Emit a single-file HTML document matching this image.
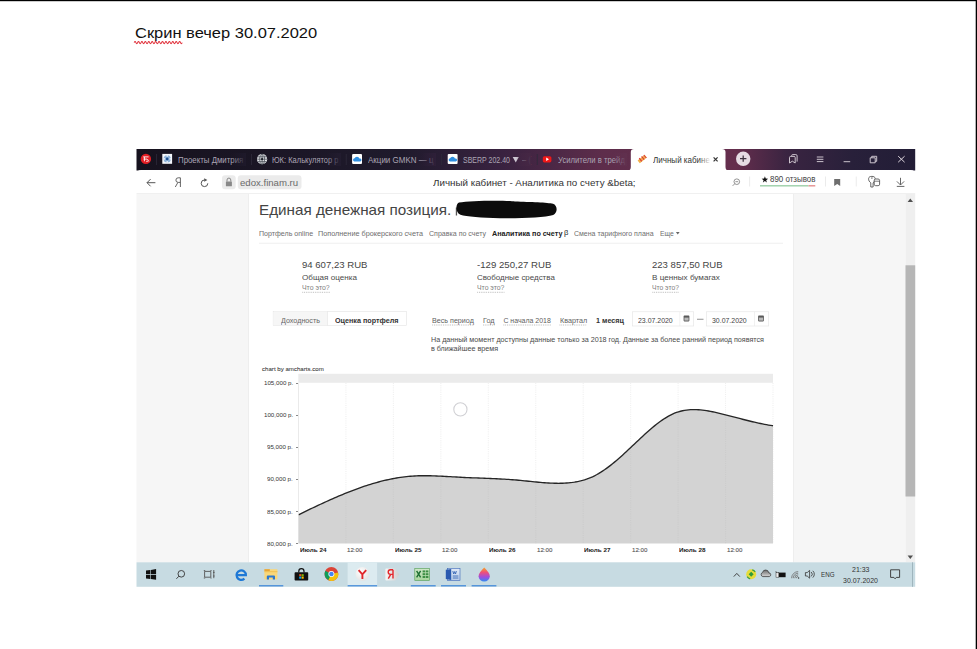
<!DOCTYPE html>
<html><head><meta charset="utf-8">
<style>
html,body{margin:0;padding:0;width:977px;height:649px;overflow:hidden;background:#fff;}
body{position:relative;font-family:"Liberation Sans",sans-serif;}
.t{position:absolute;white-space:pre;line-height:1;transform-origin:0 0;}
svg{position:absolute;left:0;top:0;}
</style></head><body>
<svg width="977" height="649" viewBox="0 0 977 649">
<defs>
<linearGradient id="tabg" x1="136" y1="0" x2="915" y2="0" gradientUnits="userSpaceOnUse">
<stop offset="0" stop-color="#16121e"/>
<stop offset="0.34" stop-color="#1f1a2c"/>
<stop offset="0.47" stop-color="#392240"/>
<stop offset="0.6" stop-color="#5e2d4b"/>
<stop offset="0.77" stop-color="#652e4d"/>
<stop offset="0.835" stop-color="#3a2441"/>
<stop offset="0.92" stop-color="#28203a"/>
<stop offset="1" stop-color="#221d36"/>
</linearGradient>
</defs>
<!-- page borders -->
<rect x="0" y="0" width="977" height="1" fill="#000"/>
<rect x="0" y="1" width="977" height="1" fill="#000" opacity="0.2"/>
<rect x="976" y="0" width="1" height="649" fill="#000"/>
<rect x="975" y="0" width="1" height="649" fill="#000" opacity="0.3"/>
<!-- red squiggle -->
<path d="M134.2,42.6 q0.86,-2.2 1.715,0 q0.86,2.2 1.715,0 q0.86,-2.2 1.715,0 q0.86,2.2 1.715,0 q0.86,-2.2 1.715,0 q0.86,2.2 1.715,0 q0.86,-2.2 1.715,0 q0.86,2.2 1.715,0 q0.86,-2.2 1.715,0 q0.86,2.2 1.715,0 q0.86,-2.2 1.715,0 q0.86,2.2 1.715,0 q0.86,-2.2 1.715,0 q0.86,2.2 1.715,0 q0.86,-2.2 1.715,0 q0.86,2.2 1.715,0 q0.86,-2.2 1.715,0 q0.86,2.2 1.715,0 q0.86,-2.2 1.715,0 q0.86,2.2 1.715,0 q0.86,-2.2 1.715,0 q0.86,2.2 1.715,0 q0.86,-2.2 1.715,0 q0.86,2.2 1.715,0 q0.86,-2.2 1.715,0 q0.86,2.2 1.715,0 q0.86,-2.2 1.715,0 q0.86,2.2 1.715,0" fill="none" stroke="#e0303a" stroke-width="1.05"/>

<!-- screenshot frame -->
<g>
<!-- tab bar -->
<rect x="136.5" y="149" width="778.7" height="21.5" fill="url(#tabg)"/>
<!-- address bar -->
<path d="M136.5,174.8 Q136.5,170.1 141,170.1 L910.7,170.1 Q915.2,170.1 915.2,174.8 L915.2,194 L136.5,194 Z" fill="#fff"/>
<rect x="136.5" y="193.4" width="778.7" height="0.7" fill="#e6e6e6"/>
<!-- active tab -->
<path d="M627.5,170.5 Q630.8,170.5 630.8,167 L630.8,152 Q630.8,149 634,149 L722,149 Q725.5,149 725.5,152 L725.5,167 Q725.5,170.5 729,170.5 Z" fill="#fff"/>
<!-- content panels -->
<rect x="136.5" y="194" width="112.5" height="368.3" fill="#f6f6f6"/>
<rect x="248" y="194" width="1" height="368.3" fill="#eeeeee"/>
<rect x="249" y="194" width="544" height="368.3" fill="#fff"/>
<rect x="793" y="194" width="112.5" height="368.3" fill="#f6f6f6"/>
<rect x="793" y="194" width="1" height="368.3" fill="#eeeeee"/>
<rect x="905.5" y="194" width="9.7" height="368.3" fill="#efefef"/>
<rect x="905.5" y="265.3" width="9.7" height="231.2" fill="#b6b6b6"/>
<path d="M907.6,202 L910.3,198.6 L913,202 Z" fill="#505050"/>
<path d="M907.6,555.6 L910.3,559 L913,555.6 Z" fill="#505050"/>
<!-- taskbar -->
<rect x="136.5" y="562.3" width="778.7" height="24.5" fill="#c7dbe2"/>
<rect x="912" y="562.3" width="1" height="24.5" fill="#9fb5bd"/>
</g>

<!-- TAB ICONS -->
<circle cx="145.9" cy="158.9" r="5.2" fill="#e31e24"/>
<path d="M143.2,156.9 h5.4 M144.4,156.9 v4.4 M143.6,159.1 h3.4 M147.4,159.1 l1.3,2.3 M146.2,161.3 h1.6" stroke="#fff" stroke-width="0.9" fill="none"/>
<g fill="#2e2a3a">
<rect x="156.2" y="154" width="0.8" height="11"/>
<rect x="251.2" y="154" width="0.8" height="11"/>
<rect x="345.8" y="154" width="0.8" height="11"/>
<rect x="441.3" y="154" width="0.8" height="11"/>
<rect x="536.8" y="154" width="0.8" height="11"/>
</g>
<!-- tab1 icon -->
<rect x="162.3" y="153.9" width="9.8" height="9.9" fill="#f4f6fa"/>
<circle cx="167.2" cy="158.9" r="3.6" fill="#8fb4dc"/>
<circle cx="167.2" cy="158.9" r="1.3" fill="#1f4f8f"/>
<g fill="#f4f6fa"><circle cx="167.2" cy="155.9" r="0.8"/><circle cx="167.2" cy="161.9" r="0.8"/><circle cx="164.2" cy="158.9" r="0.8"/><circle cx="170.2" cy="158.9" r="0.8"/></g>
<!-- tab2 icon globe -->
<circle cx="262.1" cy="159.2" r="5.1" fill="#e2e4e8"/>
<g stroke="#4a4f58" stroke-width="0.8" fill="none">
<path d="M257.2,159.2 h9.8 M262.1,154.2 v10"/>
<ellipse cx="262.1" cy="159.2" rx="2.4" ry="5"/>
<path d="M257.9,156.8 h8.4 M257.9,161.6 h8.4"/>
</g>
<circle cx="262.1" cy="159.2" r="1.1" fill="#1b2028"/>
<!-- tab3/4 icons -->
<rect x="352.1" y="154" width="9.9" height="10" fill="#fff" rx="1"/>
<path d="M354.2,161.6 a1.7,1.7 0 0 1 0.3,-3.3 a2.6,2.6 0 0 1 4.9,0.2 a1.6,1.6 0 0 1 0.9,3.1 Z" fill="#2f8ee0"/>
<rect x="447.7" y="154" width="9.9" height="10" fill="#fff" rx="1"/>
<path d="M449.8,161.6 a1.7,1.7 0 0 1 0.3,-3.3 a2.6,2.6 0 0 1 4.9,0.2 a1.6,1.6 0 0 1 0.9,3.1 Z" fill="#2f8ee0"/>
<path d="M512.7,156.9 h6.1 l-3.05,5.6 Z" fill="#cfc8d4"/>
<!-- youtube -->
<rect x="542.8" y="156.2" width="8.6" height="6.2" rx="1.6" fill="#f01818"/>
<path d="M546.2,157.6 L549,159.3 L546.2,161 Z" fill="#fff"/>
<!-- active tab icon -->
<path d="M637.6,160.6 L644.6,154.8 L646.8,157.4 L639.8,163.2 Z" fill="#f2b04a"/>
<path d="M639.2,158.2 L641.8,161.4 M641.6,156.4 L644.2,159.6 M643.8,155 L646.4,158" stroke="#d9393e" stroke-width="1.1"/>
<path d="M713.6,157.3 L717.6,161.3 M717.6,157.3 L713.6,161.3" stroke="#333" stroke-width="1.2"/>
<!-- plus -->
<circle cx="743.2" cy="158.8" r="7.2" fill="#e6dce4"/>
<path d="M740,158.6 h6.4 M743.2,155.4 v6.4" stroke="#3e3440" stroke-width="1.25"/>
<!-- window controls -->
<g stroke="#ddd5dd" stroke-width="0.9" fill="none">
<path d="M791.6,155.8 Q791.6,154.6 792.8,154.6 H795.8 Q797.1,154.6 797.1,155.8 V161.6"/>
<path d="M789.5,157.6 Q789.5,156.4 790.7,156.4 H794 Q795.2,156.4 795.2,157.6 V163 L792.35,161.2 L789.5,163 Z" fill="#3a2540"/>
<path d="M816.8,157 h6.6 M816.8,159.3 h6.6 M816.8,161.6 h6.6"/>
<path d="M843.6,161.7 h6.6"/>
<path d="M870.2,157.8 h5 v5 h-5 Z M871.7,157.8 v-1.5 h5 v5 h-1.5"/>
<path d="M898.2,156.2 L904.6,162.2 M904.6,156.2 L898.2,162.2" stroke-width="1"/>
</g>

<!-- ADDRESS BAR ICONS -->
<g stroke="#555" stroke-width="1" fill="none">
<path d="M147,182.7 h8.4 M150.6,179.1 L147,182.7 L150.6,186.3"/>
<path d="M204.5,180 A3.3,3.3 0 1 0 207.8,183.3"/>
</g>
<path d="M204.2,178.2 L207.4,180 L204.2,181.8 Z" fill="#555"/>
<path d="M175.3,187 L177.8,182.6 M180.4,177.8 v9.2 M180.4,177.8 h-2.2 a2.3,2.3 0 0 0 0,4.6 h2.2" stroke="#555" stroke-width="0.9" fill="none"/>
<rect x="222" y="175.2" width="13.7" height="14" rx="3" fill="#ebebeb"/>
<rect x="225.9" y="181.5" width="6" height="4.7" rx="0.5" fill="#888"/>
<path d="M227,181.6 v-1.6 a1.9,1.9 0 0 1 3.8,0 v1.6" stroke="#888" stroke-width="1" fill="none"/>
<rect x="237.8" y="175.2" width="63.7" height="14" rx="3" fill="#ebebeb"/>
<!-- right icons -->
<g stroke="#888" stroke-width="0.9" fill="none">
<circle cx="736.8" cy="181.7" r="2.8"/>
<path d="M734.8,183.7 L732.6,185.9 M735.4,181.7 h2.8"/>
</g>
<g fill="#e6e6e6">
<rect x="749.3" y="176.5" width="0.8" height="10"/>
<rect x="825" y="176.5" width="0.8" height="10"/>
<rect x="855.8" y="176.5" width="0.8" height="10"/>
</g>
<path d="M764.90,176.30 L765.72,178.57 L768.13,178.65 L766.23,180.13 L766.90,182.45 L764.90,181.10 L762.90,182.45 L763.57,180.13 L761.67,178.65 L764.08,178.57 Z" fill="#111"/>
<rect x="760" y="185.1" width="48.5" height="1.4" fill="#9ccfa8"/>
<rect x="808.5" y="185.1" width="6.8" height="1.4" fill="#e49090"/>
<path d="M834.2,178.9 h6 v7 l-3,-2 -3,2 Z" fill="#6e6e6e"/>
<g stroke="#555" stroke-width="0.9" fill="none">
<path d="M870.8,187 v-4.2 C869.2,181.8 868.5,180.2 868.6,178.6 C868.8,176.8 870.2,176.4 871.9,176.4 C873.6,176.4 875,176.8 875.2,178.6 C875.3,180.2 874.6,181.8 873.1,182.8 V187 Z" stroke="#555" stroke-width="0.9" fill="#fff"/>
<circle cx="871.9" cy="178.1" r="0.8" fill="#777" stroke="none"/>
<rect x="874.2" y="179" width="5.4" height="6.7" rx="1.5" stroke="#555" stroke-width="0.9" fill="#fff"/>
<path d="M874.2,181.2 h5.4" stroke="#555" stroke-width="0.8"/>
<path d="M900.5,177.8 v7 M896.9,181.4 L900.5,185 L904.1,181.4 M896.8,186.4 h7.6"/>
</g>

<!-- CONTENT -->
<!-- redaction blob -->
<rect x="455.8" y="207.5" width="1.3" height="8" fill="#555"/>
<path d="M459,202.6 C470,200.4 505,200.2 515,201.4 C530,202 548,202.2 553,203.8 C557.8,205.4 557.8,213 553.2,215 C545,217.5 520,218.6 500,218.2 C482,217.8 466,216.8 460.5,214.8 C455.6,212.8 455.2,204.2 459,202.6 Z" fill="#0c0c0c"/>
<!-- nav separator -->
<rect x="259" y="242.8" width="524" height="0.8" fill="#ececec"/>
<!-- nav caret -->
<path d="M675.9,232.1 L679.6,232.1 L677.75,234.4 Z" fill="#666"/>
<!-- dotted underlines for что это -->
<g stroke="#8a8a8a" stroke-width="0.6" stroke-dasharray="0.9,0.9">
<path d="M302.3,292.3 h27.7"/>
<path d="M477.2,292.3 h27.4"/>
<path d="M652.4,292.3 h27"/>
<path d="M432.2,325 h41.8 M483,325 h11.6 M503.4,325 h47.5 M559.5,325 h27.2"/>
</g>
<!-- button group -->
<rect x="273.2" y="311.3" width="133.3" height="14.2" fill="#fff" stroke="#e3e3e3" stroke-width="0.6"/>
<rect x="273.5" y="311.6" width="53.7" height="13.6" fill="#f6f6f6"/>
<rect x="327.1" y="311.3" width="0.6" height="14.2" fill="#e3e3e3"/>
<!-- date inputs -->
<rect x="632.5" y="311.8" width="61.2" height="14.2" fill="#fff" stroke="#e3e3e3" stroke-width="0.6"/>
<rect x="679.6" y="311.8" width="0.6" height="14.2" fill="#e8e8e8"/>
<rect x="706.5" y="311.8" width="62.2" height="14.2" fill="#fff" stroke="#e3e3e3" stroke-width="0.6"/>
<rect x="754.1" y="311.8" width="0.6" height="14.2" fill="#e8e8e8"/>
<g fill="#5a5a5a">
<rect x="683.6" y="315.6" width="5.8" height="5.8" rx="0.8"/>
<rect x="758.1" y="315.6" width="5.8" height="5.8" rx="0.8"/>
</g>
<g fill="#b9b9b9">
<rect x="684.4" y="317.6" width="4.2" height="3"/>
<rect x="758.9" y="317.6" width="4.2" height="3"/>
</g>
<rect x="697" y="318.8" width="6.5" height="0.8" fill="#777"/>

<!-- CHART -->
<rect x="298.3" y="373.8" width="474.7" height="9" fill="#ebebeb"/>
<g stroke="#e2e2e2" stroke-width="0.6" stroke-dasharray="1,1.2">
<path d="M345.95,383 V543.6 M393.4,383 V543.6 M440.85,383 V543.6 M488.3,383 V543.6 M535.75,383 V543.6 M583.2,383 V543.6 M630.65,383 V543.6 M678.1,383 V543.6 M725.55,383 V543.6 M773,383 V543.6"/>
</g>
<path d="M298.5,514.78 L300.5,513.81 L302.5,512.83 L304.5,511.86 L306.5,510.89 L308.5,509.93 L310.5,508.97 L312.5,508.01 L314.5,507.06 L316.5,506.12 L318.5,505.18 L320.5,504.25 L322.5,503.32 L324.5,502.40 L326.5,501.49 L328.5,500.58 L330.5,499.69 L332.5,498.80 L334.5,497.93 L336.5,497.06 L338.5,496.20 L340.5,495.36 L342.5,494.52 L344.5,493.70 L346.5,492.89 L348.5,492.09 L350.5,491.31 L352.5,490.54 L354.5,489.78 L356.5,489.04 L358.5,488.32 L360.5,487.61 L362.5,486.91 L364.5,486.23 L366.5,485.57 L368.5,484.93 L370.5,484.30 L372.5,483.69 L374.5,483.10 L376.5,482.53 L378.5,481.98 L380.5,481.45 L382.5,480.94 L384.5,480.45 L386.5,479.99 L388.5,479.54 L390.5,479.12 L392.5,478.72 L394.5,478.34 L396.5,477.99 L398.5,477.66 L400.5,477.36 L402.5,477.08 L404.5,476.83 L406.5,476.60 L408.5,476.40 L410.5,476.23 L412.5,476.08 L414.5,475.96 L416.5,475.87 L418.5,475.79 L420.5,475.74 L422.5,475.71 L424.5,475.70 L426.5,475.71 L428.5,475.73 L430.5,475.77 L432.5,475.82 L434.5,475.89 L436.5,475.97 L438.5,476.05 L440.5,476.15 L442.5,476.25 L444.5,476.35 L446.5,476.47 L448.5,476.58 L450.5,476.70 L452.5,476.81 L454.5,476.93 L456.5,477.04 L458.5,477.15 L460.5,477.26 L462.5,477.36 L464.5,477.46 L466.5,477.55 L468.5,477.63 L470.5,477.72 L472.5,477.80 L474.5,477.87 L476.5,477.95 L478.5,478.03 L480.5,478.10 L482.5,478.18 L484.5,478.25 L486.5,478.33 L488.5,478.41 L490.5,478.49 L492.5,478.58 L494.5,478.66 L496.5,478.76 L498.5,478.85 L500.5,478.96 L502.5,479.06 L504.5,479.18 L506.5,479.30 L508.5,479.43 L510.5,479.57 L512.5,479.72 L514.5,479.87 L516.5,480.04 L518.5,480.22 L520.5,480.40 L522.5,480.60 L524.5,480.80 L526.5,481.01 L528.5,481.22 L530.5,481.43 L532.5,481.63 L534.5,481.84 L536.5,482.04 L538.5,482.23 L540.5,482.41 L542.5,482.58 L544.5,482.74 L546.5,482.88 L548.5,483.01 L550.5,483.11 L552.5,483.20 L554.5,483.26 L556.5,483.29 L558.5,483.30 L560.5,483.28 L562.5,483.23 L564.5,483.14 L566.5,483.02 L568.5,482.86 L570.5,482.66 L572.5,482.42 L574.5,482.13 L576.5,481.79 L578.5,481.40 L580.5,480.94 L582.5,480.43 L584.5,479.85 L586.5,479.20 L588.5,478.47 L590.5,477.67 L592.5,476.79 L594.5,475.83 L596.5,474.78 L598.5,473.65 L600.5,472.44 L602.5,471.15 L604.5,469.80 L606.5,468.38 L608.5,466.90 L610.5,465.36 L612.5,463.77 L614.5,462.13 L616.5,460.44 L618.5,458.72 L620.5,456.95 L622.5,455.15 L624.5,453.33 L626.5,451.47 L628.5,449.60 L630.5,447.72 L632.5,445.82 L634.5,443.92 L636.5,442.03 L638.5,440.14 L640.5,438.26 L642.5,436.40 L644.5,434.56 L646.5,432.75 L648.5,430.97 L650.5,429.23 L652.5,427.53 L654.5,425.88 L656.5,424.29 L658.5,422.76 L660.5,421.29 L662.5,419.89 L664.5,418.56 L666.5,417.32 L668.5,416.16 L670.5,415.09 L672.5,414.11 L674.5,413.24 L676.5,412.48 L678.5,411.81 L680.5,411.24 L682.5,410.76 L684.5,410.36 L686.5,410.05 L688.5,409.82 L690.5,409.67 L692.5,409.59 L694.5,409.57 L696.5,409.62 L698.5,409.72 L700.5,409.88 L702.5,410.09 L704.5,410.35 L706.5,410.65 L708.5,410.99 L710.5,411.36 L712.5,411.76 L714.5,412.19 L716.5,412.64 L718.5,413.10 L720.5,413.58 L722.5,414.07 L724.5,414.57 L726.5,415.08 L728.5,415.59 L730.5,416.11 L732.5,416.63 L734.5,417.15 L736.5,417.67 L738.5,418.19 L740.5,418.71 L742.5,419.23 L744.5,419.74 L746.5,420.25 L748.5,420.75 L750.5,421.24 L752.5,421.72 L754.5,422.19 L756.5,422.64 L758.5,423.09 L760.5,423.51 L762.5,423.93 L764.5,424.32 L766.5,424.70 L768.5,425.05 L770.5,425.38 L772.5,425.69 L773.0,425.77 L773,543.6 L298.5,543.6 Z" fill="#d3d3d3"/>
<g stroke="#c6c6c6" stroke-width="0.6" stroke-dasharray="1,1.2">
<path d="M345.95,495.1 V543.6 M393.40,480.5 V543.6 M440.85,478.2 V543.6 M488.30,480.4 V543.6 M535.75,484.0 V543.6 M583.20,482.2 V543.6 M630.65,449.6 V543.6 M678.10,413.9 V543.6 M725.55,416.8 V543.6"/>
</g>
<path d="M298.5,514.78 L300.5,513.81 L302.5,512.83 L304.5,511.86 L306.5,510.89 L308.5,509.93 L310.5,508.97 L312.5,508.01 L314.5,507.06 L316.5,506.12 L318.5,505.18 L320.5,504.25 L322.5,503.32 L324.5,502.40 L326.5,501.49 L328.5,500.58 L330.5,499.69 L332.5,498.80 L334.5,497.93 L336.5,497.06 L338.5,496.20 L340.5,495.36 L342.5,494.52 L344.5,493.70 L346.5,492.89 L348.5,492.09 L350.5,491.31 L352.5,490.54 L354.5,489.78 L356.5,489.04 L358.5,488.32 L360.5,487.61 L362.5,486.91 L364.5,486.23 L366.5,485.57 L368.5,484.93 L370.5,484.30 L372.5,483.69 L374.5,483.10 L376.5,482.53 L378.5,481.98 L380.5,481.45 L382.5,480.94 L384.5,480.45 L386.5,479.99 L388.5,479.54 L390.5,479.12 L392.5,478.72 L394.5,478.34 L396.5,477.99 L398.5,477.66 L400.5,477.36 L402.5,477.08 L404.5,476.83 L406.5,476.60 L408.5,476.40 L410.5,476.23 L412.5,476.08 L414.5,475.96 L416.5,475.87 L418.5,475.79 L420.5,475.74 L422.5,475.71 L424.5,475.70 L426.5,475.71 L428.5,475.73 L430.5,475.77 L432.5,475.82 L434.5,475.89 L436.5,475.97 L438.5,476.05 L440.5,476.15 L442.5,476.25 L444.5,476.35 L446.5,476.47 L448.5,476.58 L450.5,476.70 L452.5,476.81 L454.5,476.93 L456.5,477.04 L458.5,477.15 L460.5,477.26 L462.5,477.36 L464.5,477.46 L466.5,477.55 L468.5,477.63 L470.5,477.72 L472.5,477.80 L474.5,477.87 L476.5,477.95 L478.5,478.03 L480.5,478.10 L482.5,478.18 L484.5,478.25 L486.5,478.33 L488.5,478.41 L490.5,478.49 L492.5,478.58 L494.5,478.66 L496.5,478.76 L498.5,478.85 L500.5,478.96 L502.5,479.06 L504.5,479.18 L506.5,479.30 L508.5,479.43 L510.5,479.57 L512.5,479.72 L514.5,479.87 L516.5,480.04 L518.5,480.22 L520.5,480.40 L522.5,480.60 L524.5,480.80 L526.5,481.01 L528.5,481.22 L530.5,481.43 L532.5,481.63 L534.5,481.84 L536.5,482.04 L538.5,482.23 L540.5,482.41 L542.5,482.58 L544.5,482.74 L546.5,482.88 L548.5,483.01 L550.5,483.11 L552.5,483.20 L554.5,483.26 L556.5,483.29 L558.5,483.30 L560.5,483.28 L562.5,483.23 L564.5,483.14 L566.5,483.02 L568.5,482.86 L570.5,482.66 L572.5,482.42 L574.5,482.13 L576.5,481.79 L578.5,481.40 L580.5,480.94 L582.5,480.43 L584.5,479.85 L586.5,479.20 L588.5,478.47 L590.5,477.67 L592.5,476.79 L594.5,475.83 L596.5,474.78 L598.5,473.65 L600.5,472.44 L602.5,471.15 L604.5,469.80 L606.5,468.38 L608.5,466.90 L610.5,465.36 L612.5,463.77 L614.5,462.13 L616.5,460.44 L618.5,458.72 L620.5,456.95 L622.5,455.15 L624.5,453.33 L626.5,451.47 L628.5,449.60 L630.5,447.72 L632.5,445.82 L634.5,443.92 L636.5,442.03 L638.5,440.14 L640.5,438.26 L642.5,436.40 L644.5,434.56 L646.5,432.75 L648.5,430.97 L650.5,429.23 L652.5,427.53 L654.5,425.88 L656.5,424.29 L658.5,422.76 L660.5,421.29 L662.5,419.89 L664.5,418.56 L666.5,417.32 L668.5,416.16 L670.5,415.09 L672.5,414.11 L674.5,413.24 L676.5,412.48 L678.5,411.81 L680.5,411.24 L682.5,410.76 L684.5,410.36 L686.5,410.05 L688.5,409.82 L690.5,409.67 L692.5,409.59 L694.5,409.57 L696.5,409.62 L698.5,409.72 L700.5,409.88 L702.5,410.09 L704.5,410.35 L706.5,410.65 L708.5,410.99 L710.5,411.36 L712.5,411.76 L714.5,412.19 L716.5,412.64 L718.5,413.10 L720.5,413.58 L722.5,414.07 L724.5,414.57 L726.5,415.08 L728.5,415.59 L730.5,416.11 L732.5,416.63 L734.5,417.15 L736.5,417.67 L738.5,418.19 L740.5,418.71 L742.5,419.23 L744.5,419.74 L746.5,420.25 L748.5,420.75 L750.5,421.24 L752.5,421.72 L754.5,422.19 L756.5,422.64 L758.5,423.09 L760.5,423.51 L762.5,423.93 L764.5,424.32 L766.5,424.70 L768.5,425.05 L770.5,425.38 L772.5,425.69 L773.0,425.77" fill="none" stroke="#262626" stroke-width="1.35"/>
<rect x="298.2" y="383" width="0.6" height="160.6" fill="#ddd"/>
<g fill="#555">
<rect x="296" y="383" width="2" height="0.7"/>
<rect x="296" y="415.1" width="2" height="0.7"/>
<rect x="296" y="447.1" width="2" height="0.7"/>
<rect x="296" y="479.2" width="2" height="0.7"/>
<rect x="296" y="511.2" width="2" height="0.7"/>
<rect x="296" y="543.3" width="2" height="0.7"/>
</g>
<circle cx="460.4" cy="409.4" r="6.6" fill="none" stroke="#d0d0d4" stroke-width="1.1"/>

<!-- TASKBAR ICONS -->
<g fill="#111">
<path d="M146,570.6 l4.3,-0.6 v4.1 h-4.3 Z M150.9,569.9 l5.2,-0.8 v5 h-5.2 Z M146,574.8 h4.3 v4.2 l-4.3,-0.6 Z M150.9,574.8 h5.2 v5 l-5.2,-0.8 Z"/>
</g>
<g stroke="#333" stroke-width="0.9" fill="none">
<circle cx="181.3" cy="573.8" r="3.3"/>
<path d="M178.9,576.2 L176.4,578.8"/>
</g>
<g stroke="#555" stroke-width="0.9" fill="none">
<path d="M204.6,571.4 h6.2 v5.8 h-6.2 Z M203.8,570.6 h1.4 M210.4,570.6 h1.2 M203.8,578 h1.4 M210.4,578 h1.2 M213.8,570 v8.2 M213,572.4 h1.6 M213,576 h1.6"/>
</g>
<!-- edge -->
<path d="M236.6,575.2 H245.9 A4.7,4.7 0 1 0 244.4,578.6" stroke="#1e78d6" stroke-width="2.2" fill="none"/>
<!-- explorer -->
<rect x="264.4" y="569.2" width="13" height="10.2" fill="#f9d77a"/>
<rect x="264.4" y="569.2" width="5.4" height="2" fill="#e6a53a"/>
<rect x="264.4" y="571.2" width="13" height="1" fill="#f0c050"/>
<path d="M266.8,579.4 v-3 a1,1 0 0 1 1,-1 h6.2 a1,1 0 0 1 1,1 v3 h-2.2 v-2 h-3.8 v2 Z" fill="#2a78d0"/>
<rect x="259" y="585.2" width="24.3" height="1.2" fill="#3a84d8"/>
<!-- store -->
<rect x="294.6" y="572.2" width="13.6" height="8.4" rx="0.8" fill="#111"/>
<path d="M298.8,572.4 v-1.2 a2.6,2.6 0 0 1 5.2,0 v1.2" stroke="#111" stroke-width="1.2" fill="none"/>
<rect x="299.2" y="574.2" width="2.1" height="2.1" fill="#f25022"/><rect x="301.6" y="574.2" width="2.1" height="2.1" fill="#7fba00"/>
<rect x="299.2" y="576.6" width="2.1" height="2.1" fill="#00a4ef"/><rect x="301.6" y="576.6" width="2.1" height="2.1" fill="#ffb900"/>
<!-- chrome -->
<circle cx="331.4" cy="574" r="6.9" fill="#db4437"/>
<path d="M331.4,574 L338.1,572.4 A6.9,6.9 0 0 1 328.2,580.1 Z" fill="#f4c20d"/>
<path d="M331.4,574 L328.2,580.1 A6.9,6.9 0 0 1 325.3,570.8 Z" fill="#0f9d58"/>
<circle cx="331.4" cy="574" r="3" fill="#fff"/>
<circle cx="331.4" cy="574" r="2.3" fill="#4285f4"/>
<!-- yandex browser active -->
<rect x="347.6" y="562.3" width="29.5" height="24.5" fill="#dcebf0"/>
<defs>
<radialGradient id="ybg" cx="0.4" cy="0.35" r="0.7"><stop offset="0" stop-color="#ffffff"/><stop offset="1" stop-color="#e2e2e2"/></radialGradient>
<linearGradient id="yag" x1="0" y1="0" x2="1" y2="0"><stop offset="0" stop-color="#f6f6f6"/><stop offset="1" stop-color="#cfcfcf"/></linearGradient>
<linearGradient id="xlg" x1="0" y1="0" x2="0" y2="1"><stop offset="0" stop-color="#cfe8c8"/><stop offset="1" stop-color="#a8d49c"/></linearGradient>
<linearGradient id="wdg" x1="0" y1="0" x2="0" y2="1"><stop offset="0" stop-color="#dfe8f6"/><stop offset="1" stop-color="#b8cbe8"/></linearGradient>
<linearGradient id="drg" x1="0" y1="0" x2="0" y2="1"><stop offset="0" stop-color="#f5a623"/><stop offset="0.35" stop-color="#ef4f7a"/><stop offset="0.7" stop-color="#9b4fe0"/><stop offset="1" stop-color="#2f8cf0"/></linearGradient>
</defs>
<circle cx="362.4" cy="574" r="6.9" fill="url(#ybg)"/>
<path d="M358.6,570.2 L362.4,574.4 L366.2,570.2 M362.4,574.2 v4.8" stroke="#e0262b" stroke-width="1.9" fill="none"/>
<rect x="347.6" y="585.2" width="29.5" height="1.2" fill="#3a84d8"/>
<!-- yandex -->
<path d="M385.4,569 a0.8,0.8 0 0 1 0.8,-0.6 h9 l4,6 -4,6 h-9 a0.8,0.8 0 0 1 -0.8,-0.6 Z" fill="url(#yag)"/>
<path d="M393,569.8 v8.8 M393,569.8 h-2.5 a2.3,2.3 0 0 0 0,4.6 h2.5 M390.7,574.4 l-2.4,4.2" stroke="#e4262b" stroke-width="1.4" fill="none"/>
<!-- excel -->
<rect x="414.8" y="568.4" width="14.8" height="12" fill="url(#xlg)" stroke="#4f9a52" stroke-width="0.6"/>
<path d="M416.6,570.8 L420.6,577.4 M420.6,570.8 L416.6,577.4" stroke="#1d6f32" stroke-width="1.4"/>
<g fill="#3f8f45"><rect x="422.6" y="570.4" width="2.6" height="2"/><rect x="425.8" y="570.4" width="2.6" height="2"/><rect x="422.6" y="573.2" width="2.6" height="2"/><rect x="425.8" y="573.2" width="2.6" height="2"/><rect x="422.6" y="576" width="2.6" height="2"/><rect x="425.8" y="576" width="2.6" height="2"/></g>
<rect x="410.8" y="585.2" width="24.9" height="1.2" fill="#3a84d8"/>
<!-- word -->
<rect x="447.6" y="568.4" width="12.4" height="12" fill="url(#wdg)" stroke="#3a66b8" stroke-width="0.6"/>
<path d="M445.8,569.8 L451.2,569 L451.2,580 L445.8,579 Z" fill="#2a5ab0"/>
<path d="M452.8,571 l0.9,3 0.9,-2.4 0.9,2.4 0.9,-3 M452.8,576 h5.6 M452.8,578 h5.6" stroke="#2a5ab0" stroke-width="0.8" fill="none"/>
<rect x="441" y="585.2" width="25" height="1.2" fill="#3a84d8"/>
<!-- drop -->
<path d="M484.2,567.5 C487.2,570.6 489.8,573.4 489.8,576.2 a5.6,5.2 0 0 1 -11.2,0 C478.6,573.4 481.2,570.6 484.2,567.5 Z" fill="url(#drg)"/>
<rect x="471.6" y="585.2" width="24.8" height="1.2" fill="#3a84d8"/>
<!-- tray -->
<path d="M733.8,576.6 L736.8,573.4 L739.8,576.6" stroke="#333" stroke-width="0.9" fill="none"/>
<circle cx="751.2" cy="574.3" r="5" fill="#e6dc3a"/>
<path d="M751.2,571.8 L753.7,574.3 L751.2,576.8 L748.7,574.3 Z" fill="#2e9a3c"/>
<path d="M747.2,576.6 a4.6,4.6 0 0 0 3,2.2 M755.2,572 a4.6,4.6 0 0 0 -3,-2.2" stroke="#3aa048" stroke-width="1.2" fill="none"/>
<defs><linearGradient id="cld" x1="0" y1="0" x2="0" y2="1"><stop offset="0" stop-color="#6a6a6a"/><stop offset="1" stop-color="#d8d8d8"/></linearGradient></defs>
<path d="M762.8,576.6 A2.2,2.2 0 0 1 762.6,572.4 A3.1,3.1 0 0 1 768.7,572.8 A1.95,1.95 0 0 1 769.4,576.6 Z" fill="url(#cld)" stroke="#3c3c3c" stroke-width="0.8"/>
<rect x="778.6" y="572.6" width="7" height="4.6" fill="#111"/>
<rect x="776" y="572.6" width="2.8" height="4.6" fill="#f0f0f0" stroke="#333" stroke-width="0.5"/>
<path d="M775.6,571.6 l1.6,1" stroke="#333" stroke-width="0.8"/>
<g stroke="#6a6a6a" stroke-width="0.8" fill="none">
<path d="M791.6,578.2 a6.6,6.6 0 0 1 6.6,-6.6 M793.2,578.2 a5,5 0 0 1 5,-5 M794.8,578.2 a3.4,3.4 0 0 1 3.4,-3.4 M796.4,578.2 a1.8,1.8 0 0 1 1.8,-1.8"/>
</g>
<circle cx="798.6" cy="578" r="0.7" fill="#333"/>
<path d="M805.4,572.6 h1.8 l2.4,-2.2 v7.8 l-2.4,-2.2 h-1.8 Z" fill="none" stroke="#333" stroke-width="0.8"/>
<path d="M811.2,572 a3,3 0 0 1 0,4.4 M812.8,570.8 a4.6,4.6 0 0 1 0,6.8" fill="none" stroke="#333" stroke-width="0.8"/>
<path d="M890.6,569.8 h9 v7.6 h-3.3 l-1.2,1.4 -1.2,-1.4 h-3.3 Z" fill="none" stroke="#333" stroke-width="0.9"/>
</svg>
<div class="t" style="top:25px;font-size:15.22px;color:#111;left:134.70px;transform:scaleX(1.082);">Скрин вечер 30.07.2020</div>
<div class="t" style="top:157px;font-size:8.24px;color:#aca5b4;left:178.20px;transform:scaleX(0.952);">Проекты Дмитрия</div>
<div class="t" style="top:157px;font-size:8.24px;color:#aca5b4;left:272.00px;transform:scaleX(0.914);">ЮК: Калькулятор р</div>
<div class="t" style="top:157px;font-size:8.24px;color:#aca5b4;left:368.00px;transform:scaleX(0.970);">Акции GMKN — ц</div>
<div class="t" style="top:157px;font-size:8.24px;color:#aca5b4;left:463.00px;transform:scaleX(0.851);">SBERP 202.40</div>
<div class="t" style="top:157px;font-size:8.24px;color:#aca5b4;left:521.50px;transform:scaleX(0.935);">– (</div>
<div class="t" style="top:157px;font-size:8.24px;color:#aca5b4;left:557.60px;transform:scaleX(0.936);">Усилители в трейд</div>
<div class="t" style="top:157px;font-size:8.24px;color:#333;left:653.00px;transform:scaleX(0.975);">Личный кабине</div>
<div class="t" style="top:179px;font-size:8.66px;color:#6a6a6a;left:240.00px;transform:scaleX(1.108);">edox.finam.ru</div>
<div class="t" style="top:179px;font-size:9.36px;color:#333;left:432.50px;transform:scaleX(1.048);">Личный кабинет - Аналитика по счету &amp;beta;</div>
<div class="t" style="top:176px;font-size:8.24px;color:#444;left:769.50px;transform:scaleX(0.965);">890 отзывов</div>
<div class="t" style="top:203px;font-size:14.80px;color:#444;left:259.30px;transform:scaleX(1.029);">Единая денежная позиция.</div>
<div class="t" style="top:231px;font-size:6.84px;color:#6e6e6e;left:258.70px;transform:scaleX(1.034);">Портфель online</div>
<div class="t" style="top:231px;font-size:6.84px;color:#6e6e6e;left:318.00px;transform:scaleX(1.064);">Пополнение брокерского счета</div>
<div class="t" style="top:231px;font-size:6.84px;color:#6e6e6e;left:429.00px;transform:scaleX(1.033);">Справка по счету</div>
<div class="t" style="top:231px;font-size:6.84px;color:#222;font-weight:700;left:491.60px;transform:scaleX(1.053);">Аналитика по счету</div>
<div class="t" style="top:229px;font-size:7.82px;color:#222;left:564.40px;transform:scaleX(0.978);">β</div>
<div class="t" style="top:231px;font-size:6.84px;color:#6e6e6e;left:574.00px;transform:scaleX(1.025);">Смена тарифного плана</div>
<div class="t" style="top:231px;font-size:6.84px;color:#6e6e6e;left:660.00px;transform:scaleX(0.992);">Еще</div>
<div class="t" style="top:261px;font-size:9.08px;color:#444;left:302.30px;transform:scaleX(1.054);">94 607,23 RUB</div>
<div class="t" style="top:274px;font-size:7.40px;color:#4a4a4a;left:302.30px;transform:scaleX(1.096);">Общая оценка</div>
<div class="t" style="top:285px;font-size:6.70px;color:#808080;left:302.30px;transform:scaleX(1.037);">Что это?</div>
<div class="t" style="top:261px;font-size:9.08px;color:#444;left:477.20px;transform:scaleX(1.060);">-129 250,27 RUB</div>
<div class="t" style="top:274px;font-size:7.40px;color:#4a4a4a;left:477.20px;transform:scaleX(1.074);">Свободные средства</div>
<div class="t" style="top:285px;font-size:6.70px;color:#808080;left:477.20px;transform:scaleX(1.025);">Что это?</div>
<div class="t" style="top:261px;font-size:9.08px;color:#444;left:652.40px;transform:scaleX(1.051);">223 857,50 RUB</div>
<div class="t" style="top:274px;font-size:7.40px;color:#4a4a4a;left:652.40px;transform:scaleX(1.099);">В ценных бумагах</div>
<div class="t" style="top:285px;font-size:6.70px;color:#808080;left:652.40px;transform:scaleX(1.007);">Что это?</div>
<div class="t" style="top:317px;font-size:6.98px;color:#666;left:280.90px;transform:scaleX(1.031);">Доходность</div>
<div class="t" style="top:317px;font-size:6.98px;color:#333;font-weight:700;left:335.00px;transform:scaleX(1.032);">Оценка портфеля</div>
<div class="t" style="top:317px;font-size:6.98px;color:#606060;left:432.20px;transform:scaleX(1.025);">Весь период</div>
<div class="t" style="top:317px;font-size:6.98px;color:#606060;left:483.00px;transform:scaleX(1.044);">Год</div>
<div class="t" style="top:317px;font-size:6.98px;color:#606060;left:503.40px;">С начала 2018</div>
<div class="t" style="top:317px;font-size:6.98px;color:#606060;left:559.50px;transform:scaleX(1.033);">Квартал</div>
<div class="t" style="top:317px;font-size:6.98px;color:#333;font-weight:700;left:596.00px;transform:scaleX(1.038);">1 месяц</div>
<div class="t" style="top:317px;font-size:6.98px;color:#444;left:637.70px;transform:scaleX(0.995);">23.07.2020</div>
<div class="t" style="top:317px;font-size:6.98px;color:#444;left:711.70px;transform:scaleX(0.995);">30.07.2020</div>
<div class="t" style="top:336px;font-size:6.98px;color:#4a4a4a;left:431.00px;transform:scaleX(1.028);">На данный момент доступны данные только за 2018 год. Данные за более ранний период появятся</div>
<div class="t" style="top:345px;font-size:6.98px;color:#4a4a4a;left:431.00px;transform:scaleX(1.031);">в ближайшее время</div>
<div class="t" style="top:366px;font-size:6.01px;color:#333;left:262.00px;transform:scaleX(1.018);-webkit-text-stroke:0.05px #333;">chart by amcharts.com</div>
<div class="t" style="top:381px;font-size:5.59px;color:#333;left:263.60px;transform:scaleX(1.107);">105,000 р.</div>
<div class="t" style="top:413px;font-size:5.59px;color:#333;left:263.60px;transform:scaleX(1.107);">100,000 р.</div>
<div class="t" style="top:445px;font-size:5.59px;color:#333;left:267.04px;transform:scaleX(1.107);">95,000 р.</div>
<div class="t" style="top:477px;font-size:5.59px;color:#333;left:267.04px;transform:scaleX(1.107);">90,000 р.</div>
<div class="t" style="top:510px;font-size:5.59px;color:#333;left:267.04px;transform:scaleX(1.107);">85,000 р.</div>
<div class="t" style="top:542px;font-size:5.59px;color:#333;left:267.04px;transform:scaleX(1.107);">80,000 р.</div>
<div class="t" style="top:547px;font-size:6.01px;color:#222;font-weight:700;left:299.60px;transform:scaleX(1.050);">Июль 24</div>
<div class="t" style="top:547px;font-size:6.01px;color:#555;left:347.05px;transform:scaleX(1.026);-webkit-text-stroke:0.1px #555;">12:00</div>
<div class="t" style="top:547px;font-size:6.01px;color:#222;font-weight:700;left:394.50px;transform:scaleX(1.050);">Июль 25</div>
<div class="t" style="top:547px;font-size:6.01px;color:#555;left:441.95px;transform:scaleX(1.026);-webkit-text-stroke:0.1px #555;">12:00</div>
<div class="t" style="top:547px;font-size:6.01px;color:#222;font-weight:700;left:489.40px;transform:scaleX(1.050);">Июль 26</div>
<div class="t" style="top:547px;font-size:6.01px;color:#555;left:536.85px;transform:scaleX(1.026);-webkit-text-stroke:0.1px #555;">12:00</div>
<div class="t" style="top:547px;font-size:6.01px;color:#222;font-weight:700;left:584.30px;transform:scaleX(1.050);">Июль 27</div>
<div class="t" style="top:547px;font-size:6.01px;color:#555;left:631.75px;transform:scaleX(1.026);-webkit-text-stroke:0.1px #555;">12:00</div>
<div class="t" style="top:547px;font-size:6.01px;color:#222;font-weight:700;left:679.20px;transform:scaleX(1.050);">Июль 28</div>
<div class="t" style="top:547px;font-size:6.01px;color:#555;left:726.65px;transform:scaleX(1.026);-webkit-text-stroke:0.1px #555;">12:00</div>
<div class="t" style="top:572px;font-size:7.12px;color:#333;left:821.20px;transform:scaleX(0.876);">ENG</div>
<div class="t" style="top:567px;font-size:7.12px;color:#333;left:851.80px;transform:scaleX(0.983);">21:33</div>
<div class="t" style="top:578px;font-size:7.12px;color:#333;left:843.40px;transform:scaleX(0.981);">30.07.2020</div>
<svg width="977" height="649" viewBox="0 0 977 649" style="pointer-events:none">
<defs>
<linearGradient id="fd1" x1="0" x2="1"><stop offset="0" stop-color="#1e192a" stop-opacity="0"/><stop offset="1" stop-color="#1e192a"/></linearGradient>
<linearGradient id="fd2" x1="0" x2="1"><stop offset="0" stop-color="#221c2f" stop-opacity="0"/><stop offset="1" stop-color="#221c2f"/></linearGradient>
<linearGradient id="fd3" x1="0" x2="1"><stop offset="0" stop-color="#2e1f38" stop-opacity="0"/><stop offset="1" stop-color="#2e1f38"/></linearGradient>
<linearGradient id="fd4" x1="0" x2="1"><stop offset="0" stop-color="#452744" stop-opacity="0"/><stop offset="1" stop-color="#452744"/></linearGradient>
<linearGradient id="fd5" x1="0" x2="1"><stop offset="0" stop-color="#60304e" stop-opacity="0"/><stop offset="1" stop-color="#60304e"/></linearGradient>
<linearGradient id="fd6" x1="0" x2="1"><stop offset="0" stop-color="#fff" stop-opacity="0"/><stop offset="1" stop-color="#fff"/></linearGradient>
</defs>
<rect x="231" y="153" width="15" height="13" fill="url(#fd1)"/>
<rect x="326" y="153" width="15" height="13" fill="url(#fd2)"/>
<rect x="421" y="153" width="15" height="13" fill="url(#fd3)"/>
<rect x="516" y="153" width="15" height="13" fill="url(#fd4)"/>
<rect x="612" y="153" width="15" height="13" fill="url(#fd5)"/>
<rect x="699" y="153" width="12" height="13" fill="url(#fd6)"/>
</svg>
</body></html>
